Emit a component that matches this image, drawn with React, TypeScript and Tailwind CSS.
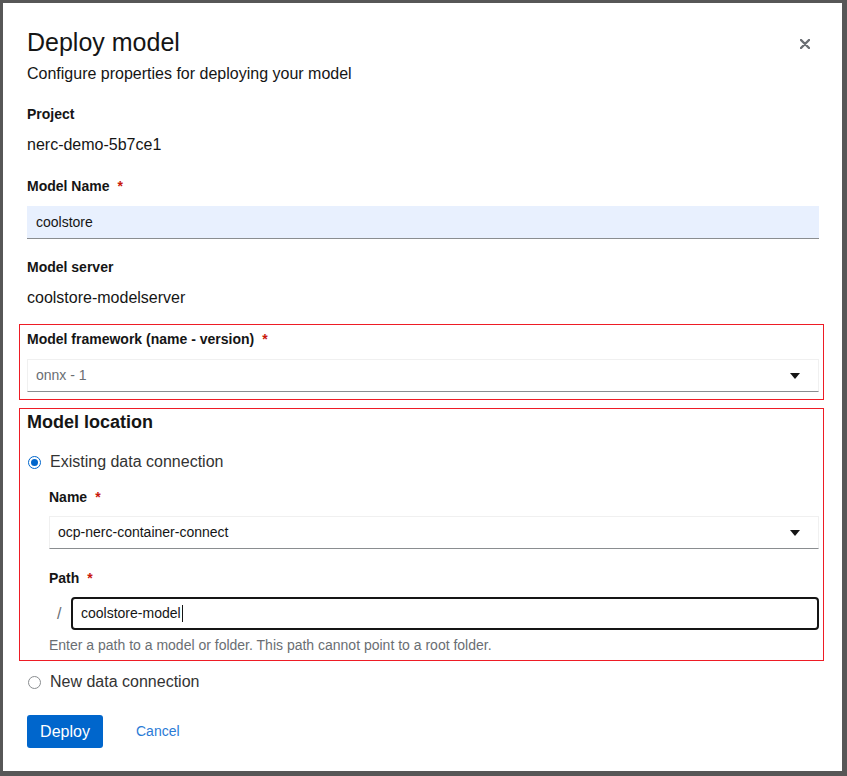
import { ReactNode } from 'react'

function Req() {
  return <span className="ml-2 text-[#c9190b]">*</span>
}

function Label({ children, req }: { children: ReactNode; req?: boolean }) {
  return (
    <div className="text-[14px] leading-[21px] font-bold text-[#151515]">
      {children}
      {req && <Req />}
    </div>
  )
}

function Caret() {
  return (
    <svg width="10" height="6" viewBox="0 0 10 6" className="text-[#151515]">
      <path d="M0 0 H10 L5 6 Z" fill="currentColor" />
    </svg>
  )
}

function Select({ value, muted }: { value: string; muted?: boolean }) {
  return (
    <div className="flex h-[33px] items-center justify-between border border-[#f0f0f0] border-b-[#8a8d90] pl-2 pr-[18px]">
      <span className={`text-[14px] ${muted ? 'text-[#6a6e73]' : 'text-[#151515]'}`}>{value}</span>
      <Caret />
    </div>
  )
}

function Radio({ checked, children }: { checked?: boolean; children: ReactNode }) {
  return (
    <div className="flex items-center gap-[9px] pl-[1px]">
      <span
        className={`flex h-[13px] w-[13px] items-center justify-center rounded-full border ${
          checked ? 'border-[#0066cc]' : 'border-[#8a8d90]'
        }`}
      >
        {checked && <span className="h-[7px] w-[7px] rounded-full bg-[#0066cc]" />}
      </span>
      <span className="text-[16px] leading-[24px] text-[#333]">{children}</span>
    </div>
  )
}

export default function App() {
  return (
    <div
      className="h-[776px] w-full overflow-hidden bg-[#575757] pl-[3px] pt-[3px]"
      style={{ fontFamily: '"Liberation Sans", Arial, sans-serif' }}
    >
      <div className="relative h-[768px] w-[839px] bg-white px-6 pt-6">
        <button className="absolute right-[32px] top-[36px] text-[#6a6e73]">
          <svg width="10" height="10" viewBox="0 0 10 10">
            <path d="M1 1 L9 9 M9 1 L1 9" stroke="currentColor" strokeWidth="2.4" strokeLinecap="round" />
          </svg>
        </button>

        <h1 className="text-[25px] leading-[30px] text-[#151515]">Deploy model</h1>
        <p className="mt-[5px] text-[16px] leading-[24px] text-[#151515]">Configure properties for deploying your model</p>

        <div className="mt-[18px] w-[792px]">
          <Label>Project</Label>
          <div className="mt-2 text-[16px] leading-[24px] text-[#151515]">nerc-demo-5b7ce1</div>

          <div className="mt-[19px]">
            <Label req>Model Name</Label>
          </div>
          <div className="mt-[9px] flex h-[33px] items-center border-b border-[#8a8d90] bg-[#e8f0fe] pl-[9px] text-[14px] text-[#151515]">
            coolstore
          </div>

          <div className="mt-[18px]">
            <Label>Model server</Label>
          </div>
          <div className="mt-2 text-[16px] leading-[24px] text-[#151515]">coolstore-modelserver</div>

          <div className="-ml-2 -mr-[5px] mt-[14px] border border-[#ee1c25] pb-[7px] pl-[7px] pr-[4px] pt-[4px]">
            <Label req>Model framework (name - version)</Label>
            <div className="mt-[9px]">
              <Select value="onnx - 1" muted />
            </div>
          </div>

          <div className="-ml-2 -mr-[5px] mt-[8px] border border-[#ee1c25] pb-[4px] pl-[7px] pr-[4px]">
            <div className="text-[18px] font-bold leading-[26px] text-[#151515]">Model location</div>
            <div className="mt-[15px]">
              <Radio checked>Existing data connection</Radio>
            </div>
            <div className="pl-[22px]">
              <div className="mt-[13px]">
                <Label req>Name</Label>
              </div>
              <div className="mt-[8px]">
                <Select value="ocp-nerc-container-connect" />
              </div>
              <div className="mt-[19px]">
                <Label req>Path</Label>
              </div>
              <div className="mt-[8px] flex items-center">
                <span className="w-[22px] pl-[8px] text-[16px] text-[#6a6e73]">/</span>
                <div className="flex h-[33px] flex-1 items-center rounded-[4px] border-2 border-[#151515] pl-[8px] text-[14px] text-[#151515]">
                  coolstore-model
                  <span className="ml-[1px] inline-block h-[17px] w-px bg-[#151515]" />
                </div>
              </div>
              <div className="mt-[5px] text-[14px] leading-[21px] text-[#6a6e73]">
                Enter a path to a model or folder. This path cannot point to a root folder.
              </div>
            </div>
          </div>

          <div className="mt-[9px]">
            <Radio>New data connection</Radio>
          </div>

          <div className="mt-[21px] flex items-center gap-[33px]">
            <button className="h-[33px] w-[76px] rounded-[3px] bg-[#0066cc] text-[16px] text-white">Deploy</button>
            <button className="text-[14px] text-[#2b7bd6]">Cancel</button>
          </div>
        </div>
      </div>
    </div>
  )
}
